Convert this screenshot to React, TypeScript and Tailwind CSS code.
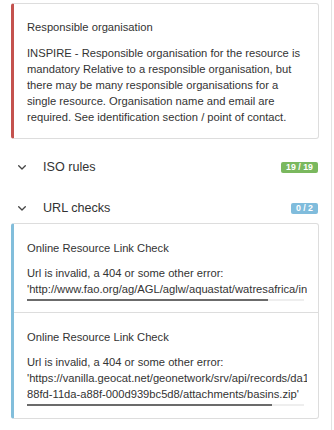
import React from 'react';

type Check = {
  title: string;
  message: string;
  // URL pieces as they wrap in the original (it breaks on the hyphen only).
  urlLines: string[];
  thumb: number;
};

const checks: Check[] = [
  {
    title: 'Online Resource Link Check',
    message: 'Url is invalid, a 404 or some other error:',
    urlLines: ["'http://www.fao.org/ag/AGL/aglw/aquastat/watresafrica/index.stm'"],
    thumb: 241,
  },
  {
    title: 'Online Resource Link Check',
    message: 'Url is invalid, a 404 or some other error:',
    urlLines: [
      "'https://vanilla.geocat.net/geonetwork/srv/api/records/da165110-",
      "88fd-11da-a88f-000d939bc5d8/attachments/basins.zip'",
    ],
    thumb: 245,
  },
];

const Chevron = () => (
  <svg viewBox="0 0 8 5" className="w-[8px] h-[5px]" aria-hidden="true">
    <polyline points="0.7,0.7 4,4 7.3,0.7" fill="none" stroke="#444" strokeWidth="1.3" strokeLinecap="round" strokeLinejoin="round" />
  </svg>
);

function SectionHeader({ label, badge, badgeColor }: { label: string; badge: string; badgeColor: string }) {
  return (
    <div className="flex items-center h-[26px] pl-[18px] pr-[13px]">
      <Chevron />
      <span className="ml-[17px] text-[12.6px] text-[#333]">{label}</span>
      <span
        className={`ml-auto h-[11px] px-[5px] rounded-[2px] text-white font-bold text-[8.8px] leading-[11px] ${badgeColor}`}
      >
        {badge}
      </span>
    </div>
  );
}

export default function App() {
  return (
    <div
      className="w-[332px] h-[430px] border-r border-[#e3e3e3] bg-white overflow-hidden text-[11.2px] leading-[16px] text-[#333]"
      style={{ fontFamily: '"Liberation Sans", Arial, sans-serif' }}
    >
      <div className="mt-[3px] ml-[11px] w-[308px] border border-[#dddddd] border-l-[3px] border-l-[#c4524e] rounded-[3px] pl-[13px] pr-[11px] pt-[15px] pb-[13px]">
        <div>Responsible organisation</div>
        <p className="mt-[10px]">
          INSPIRE - Responsible organisation for the resource is mandatory Relative to a responsible organisation, but
          there may be many responsible organisations for a single resource. Organisation name and email are required.
          See identification section / point of contact.
        </p>
      </div>

      <div className="mt-[15px]">
        <SectionHeader label="ISO rules" badge="19 / 19" badgeColor="bg-[#7ab85e]" />
      </div>
      <div className="mt-[15px]">
        <SectionHeader label="URL checks" badge="0 / 2" badgeColor="bg-[#80bcdc]" />
      </div>

      <div className="mt-[2px] ml-[11px] w-[308px] border border-[#dddddd] border-l-[3px] border-l-[#82bedb] rounded-[3px]">
        {checks.map((c, i) => (
          <div
            key={i}
            className={`pl-[13px] pr-[11px] pt-[16px] ${i === 0 ? 'pb-[11px] border-b border-[#dddddd]' : 'pb-[12px]'}`}
          >
            <div>{c.title}</div>
            <div className="mt-[9px]">
              <div>{c.message}</div>
              <div className="overflow-hidden">
                {c.urlLines.map((l, j) => (
                  <div key={j} className="whitespace-nowrap">
                    {l}
                  </div>
                ))}
              </div>
              <div className="mt-[2px] mr-[3px] h-[2px] bg-[#eeeeee]">
                <div className="h-full bg-[#6b6b6b]" style={{ width: c.thumb }} />
              </div>
            </div>
          </div>
        ))}
      </div>
    </div>
  );
}
